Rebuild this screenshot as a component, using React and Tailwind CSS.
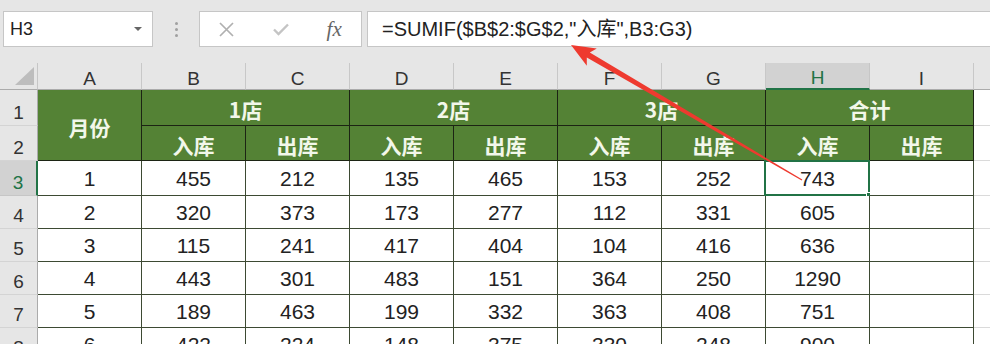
import React from 'react';

const COLS = ['A', 'B', 'C', 'D', 'E', 'F', 'G', 'H', 'I'];

const rows = [
    ['1', '455', '212', '135', '465', '153', '252', '743', ''],
    ['2', '320', '373', '173', '277', '112', '331', '605', ''],
    ['3', '115', '241', '417', '404', '104', '416', '636', ''],
    ['4', '443', '301', '483', '151', '364', '250', '1290', ''],
    ['5', '189', '463', '199', '332', '363', '408', '751', ''],
    ['6', '422', '224', '148', '375', '330', '248', '900', ''],
];

const stores = ['1店', '2店', '3店', '合计'];

// Row number cell on the left edge
const RowHead = ({ n, active }) => (
    <div className={`flex items-end justify-center pb-[3px] text-[19px] leading-none ${
        active
            ? 'bg-[#d2d2d2] text-[#217346] border-r-2 border-r-[#217346] border-b border-b-[#c6c6c6]'
            : 'bg-[#e6e6e6] text-[#333] border-r border-r-[#ababab] border-b border-b-[#d4d4d4]'
    }`}>
        {n}
    </div>
);

const HeadCell = ({ children, className = '' }) => (
    <div className={`flex items-center justify-center pt-1 bg-[#548235] text-[#f2f7ea] font-bold text-[21px] leading-none border-r border-b border-[#1c2414] font-['Noto_Sans_CJK_SC',sans-serif] ${className}`}>
        {children}
    </div>
);

const Arrow = () => (
    <svg className="absolute left-0 top-0 pointer-events-none" width="990" height="344">
        <polygon
            points="571,45 596.8,48.4 589.8,52.4 802.3,179.5 801.7,180.5 586.8,57.6 586.8,65.7"
            fill="#ee3a2f"
        />
    </svg>
);

export default function App() {
    return (
        <div className="relative w-[990px] h-[344px] overflow-hidden bg-[#e6e6e6] font-['Liberation_Sans','Noto_Sans_CJK_SC',sans-serif]">
            {/* Formula bar */}
            <div className="h-[63px] pt-[11px] flex items-start">
                <div className="ml-[3px] w-[150px] h-[36px] bg-white border border-[#c6c6c6] flex items-center pl-[6px] pr-[10px]">
                    <span className="text-[18px] text-[#222]">H3</span>
                    <span className="ml-auto w-0 h-0 border-l-[4px] border-r-[4px] border-t-[4px] border-l-transparent border-r-transparent border-t-[#666]" />
                </div>
                <div className="w-[46px] h-[36px] flex flex-col items-center justify-center gap-[3px]">
                    <span className="w-[3px] h-[3px] rounded-full bg-[#a0a0a0]" />
                    <span className="w-[3px] h-[3px] rounded-full bg-[#a0a0a0]" />
                    <span className="w-[3px] h-[3px] rounded-full bg-[#a0a0a0]" />
                </div>
                <div className="w-[163px] h-[36px] bg-white border border-[#c6c6c6] flex items-center">
                    <div className="w-[54px] flex justify-center">
                        <svg width="15" height="15" viewBox="0 0 15 15">
                            <path d="M1 1L14 14M14 1L1 14" stroke="#b0b0b0" strokeWidth="1.7" fill="none" />
                        </svg>
                    </div>
                    <div className="w-[54px] flex justify-center">
                        <svg width="16" height="13" viewBox="0 0 16 13">
                            <path d="M1 6.5L5.5 11L15 1.5" stroke="#c4c4c4" strokeWidth="2.4" fill="none" />
                        </svg>
                    </div>
                    <div className="w-[54px] flex justify-center">
                        <span className="italic text-[21px] text-[#666] font-['Liberation_Serif',serif] leading-none">fx</span>
                    </div>
                </div>
                <div className="ml-[5px] flex-1 -mr-[2px] h-[36px] bg-white border border-[#c6c6c6] flex items-center pl-[14px]">
                    <span className="text-[20px] text-[#222]">=SUMIF($B$2:$G$2,"入库",B3:G3)</span>
                </div>
            </div>

            {/* Sheet grid */}
            <div className="grid grid-cols-[38px_repeat(9,104px)_16px] grid-rows-[27px_36px_35px_35px_33px_33px_33px_33px_33px]">
                {/* corner */}
                <div className="relative bg-[#e6e6e6] border-r border-r-[#c6c6c6] border-b border-b-[#ababab]">
                    <svg className="absolute right-[3px] bottom-[4px]" width="19" height="18">
                        <polygon points="19,0 19,18 0,18" fill="#bdbdbd" />
                    </svg>
                </div>
                {COLS.map((c) => (
                    <div key={c} className={`flex items-center justify-center pt-1 text-[19px] leading-none ${
                        c === 'H'
                            ? 'bg-[#d2d2d2] text-[#217346] border-r border-r-[#c6c6c6] border-b-2 border-b-[#217346]'
                            : 'text-[#333] border-r border-r-[#c8c8c8] border-b border-b-[#ababab]'
                    }`}>
                        {c}
                    </div>
                ))}
                <div className="border-b border-b-[#ababab]" />

                {/* header row 1 */}
                <RowHead n="1" />
                <HeadCell className="row-span-2">月份</HeadCell>
                {stores.map((s) => (
                    <HeadCell key={s} className="col-span-2">{s}</HeadCell>
                ))}
                <div className="bg-white border-b border-[#dadada]" />

                {/* header row 2 */}
                <RowHead n="2" />
                {stores.map((s) => (
                    <React.Fragment key={s}>
                        <HeadCell>入库</HeadCell>
                        <HeadCell>出库</HeadCell>
                    </React.Fragment>
                ))}
                <div className="bg-white border-b border-[#dadada]" />

                {/* data rows */}
                {rows.map((r, ri) => (
                    <React.Fragment key={ri}>
                        <RowHead n={ri + 3} active={ri === 0} />
                        {r.map((v, ci) => (
                            <div key={ci} className="relative bg-white flex items-center justify-center text-[21px] text-[#222] leading-none border-r border-b border-[#3d4a33]">
                                {v}
                                {ri === 0 && ci === 7 && (
                                    <>
                                        <div className="absolute -left-[2px] -top-[1px] -right-[1px] -bottom-[1px] border-2 border-[#217346]" />
                                        <div className="absolute -right-[4px] -bottom-[4px] w-[7px] h-[7px] bg-[#217346] border border-white" />
                                    </>
                                )}
                            </div>
                        ))}
                        <div className="bg-white border-b border-[#dadada]" />
                    </React.Fragment>
                ))}
            </div>

            <Arrow />
        </div>
    );
}
